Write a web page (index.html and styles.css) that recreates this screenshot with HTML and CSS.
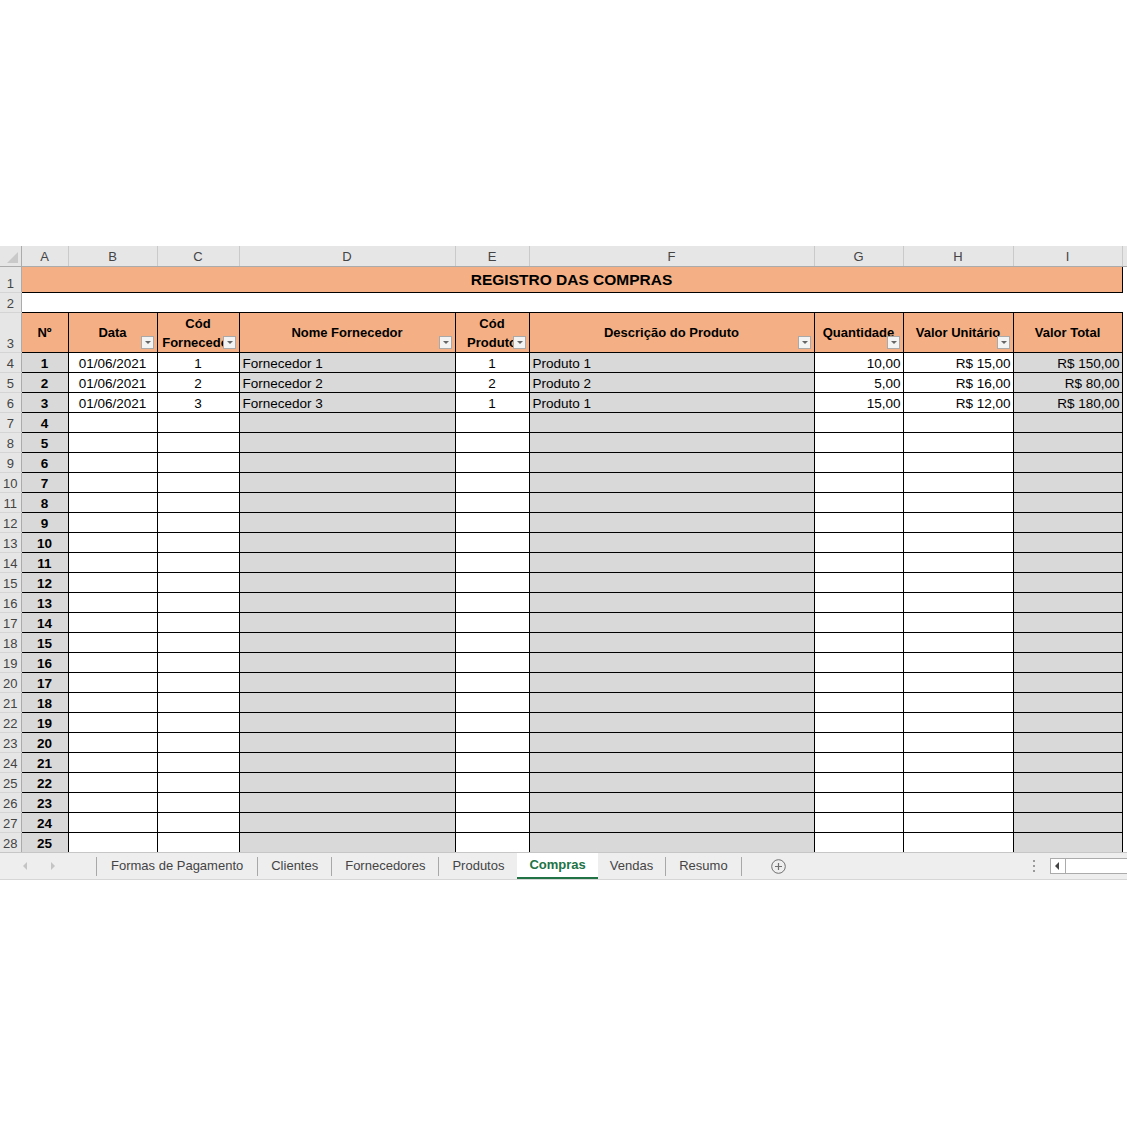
FILE: index.html
```html
<!DOCTYPE html>
<html lang="pt-BR">
<head>
    <meta charset="UTF-8">
    <title>Registro das Compras</title>
    <link rel="stylesheet" href="styles.css">
</head>
<body>

<div id="book">
    <div id="grid">
        <table class="sheet">
            <colgroup>
                <col class="w-rh">
                <col class="w-a">
                <col class="w-b">
                <col class="w-c">
                <col class="w-d">
                <col class="w-e">
                <col class="w-f">
                <col class="w-g">
                <col class="w-h">
                <col class="w-i">
                <col class="w-j">
            </colgroup>
            <tr class="heads">
                <th class="corner"></th>
                <th>A</th><th>B</th><th>C</th><th>D</th><th>E</th><th>F</th><th>G</th><th>H</th><th>I</th><th></th>
            </tr>
            <tr class="row-title">
                <th class="rh">1</th>
                <td class="title" colspan="9">REGISTRO DAS COMPRAS</td>
                <td class="edge"></td>
            </tr>
            <tr class="row">
                <th class="rh">2</th>
                <td class="gap" colspan="9"></td>
                <td class="edge"></td>
            </tr>
            <tr class="row-head">
                <th class="rh">3</th>
                <td class="hd">Nº</td>
                <td class="hd">Data<span class="flt"></span></td>
                <td class="hd">Cód<br>Fornecedor<span class="flt"></span></td>
                <td class="hd">Nome Fornecedor<span class="flt"></span></td>
                <td class="hd">Cód<br>Produto<span class="flt"></span></td>
                <td class="hd">Descrição do Produto<span class="flt"></span></td>
                <td class="hd">Quantidade<span class="flt"></span></td>
                <td class="hd">Valor Unitário<span class="flt"></span></td>
                <td class="hd">Valor Total</td>
                <td class="edge"></td>
            </tr>
            <tr class="row"><th class="rh">4</th><td class="n">1</td><td class="c">01/06/2021</td><td class="c">1</td><td class="g l">Fornecedor 1</td><td class="c">1</td><td class="g l">Produto 1</td><td class="r">10,00</td><td class="r">R$ 15,00</td><td class="g r">R$ 150,00</td><td class="edge"></td></tr>
            <tr class="row"><th class="rh">5</th><td class="n">2</td><td class="c">01/06/2021</td><td class="c">2</td><td class="g l">Fornecedor 2</td><td class="c">2</td><td class="g l">Produto 2</td><td class="r">5,00</td><td class="r">R$ 16,00</td><td class="g r">R$ 80,00</td><td class="edge"></td></tr>
            <tr class="row"><th class="rh">6</th><td class="n">3</td><td class="c">01/06/2021</td><td class="c">3</td><td class="g l">Fornecedor 3</td><td class="c">1</td><td class="g l">Produto 1</td><td class="r">15,00</td><td class="r">R$ 12,00</td><td class="g r">R$ 180,00</td><td class="edge"></td></tr>
            <tr class="row"><th class="rh">7</th><td class="n">4</td><td></td><td></td><td class="g"></td><td></td><td class="g"></td><td></td><td></td><td class="g"></td><td class="edge"></td></tr>
            <tr class="row"><th class="rh">8</th><td class="n">5</td><td></td><td></td><td class="g"></td><td></td><td class="g"></td><td></td><td></td><td class="g"></td><td class="edge"></td></tr>
            <tr class="row"><th class="rh">9</th><td class="n">6</td><td></td><td></td><td class="g"></td><td></td><td class="g"></td><td></td><td></td><td class="g"></td><td class="edge"></td></tr>
            <tr class="row"><th class="rh">10</th><td class="n">7</td><td></td><td></td><td class="g"></td><td></td><td class="g"></td><td></td><td></td><td class="g"></td><td class="edge"></td></tr>
            <tr class="row"><th class="rh">11</th><td class="n">8</td><td></td><td></td><td class="g"></td><td></td><td class="g"></td><td></td><td></td><td class="g"></td><td class="edge"></td></tr>
            <tr class="row"><th class="rh">12</th><td class="n">9</td><td></td><td></td><td class="g"></td><td></td><td class="g"></td><td></td><td></td><td class="g"></td><td class="edge"></td></tr>
            <tr class="row"><th class="rh">13</th><td class="n">10</td><td></td><td></td><td class="g"></td><td></td><td class="g"></td><td></td><td></td><td class="g"></td><td class="edge"></td></tr>
            <tr class="row"><th class="rh">14</th><td class="n">11</td><td></td><td></td><td class="g"></td><td></td><td class="g"></td><td></td><td></td><td class="g"></td><td class="edge"></td></tr>
            <tr class="row"><th class="rh">15</th><td class="n">12</td><td></td><td></td><td class="g"></td><td></td><td class="g"></td><td></td><td></td><td class="g"></td><td class="edge"></td></tr>
            <tr class="row"><th class="rh">16</th><td class="n">13</td><td></td><td></td><td class="g"></td><td></td><td class="g"></td><td></td><td></td><td class="g"></td><td class="edge"></td></tr>
            <tr class="row"><th class="rh">17</th><td class="n">14</td><td></td><td></td><td class="g"></td><td></td><td class="g"></td><td></td><td></td><td class="g"></td><td class="edge"></td></tr>
            <tr class="row"><th class="rh">18</th><td class="n">15</td><td></td><td></td><td class="g"></td><td></td><td class="g"></td><td></td><td></td><td class="g"></td><td class="edge"></td></tr>
            <tr class="row"><th class="rh">19</th><td class="n">16</td><td></td><td></td><td class="g"></td><td></td><td class="g"></td><td></td><td></td><td class="g"></td><td class="edge"></td></tr>
            <tr class="row"><th class="rh">20</th><td class="n">17</td><td></td><td></td><td class="g"></td><td></td><td class="g"></td><td></td><td></td><td class="g"></td><td class="edge"></td></tr>
            <tr class="row"><th class="rh">21</th><td class="n">18</td><td></td><td></td><td class="g"></td><td></td><td class="g"></td><td></td><td></td><td class="g"></td><td class="edge"></td></tr>
            <tr class="row"><th class="rh">22</th><td class="n">19</td><td></td><td></td><td class="g"></td><td></td><td class="g"></td><td></td><td></td><td class="g"></td><td class="edge"></td></tr>
            <tr class="row"><th class="rh">23</th><td class="n">20</td><td></td><td></td><td class="g"></td><td></td><td class="g"></td><td></td><td></td><td class="g"></td><td class="edge"></td></tr>
            <tr class="row"><th class="rh">24</th><td class="n">21</td><td></td><td></td><td class="g"></td><td></td><td class="g"></td><td></td><td></td><td class="g"></td><td class="edge"></td></tr>
            <tr class="row"><th class="rh">25</th><td class="n">22</td><td></td><td></td><td class="g"></td><td></td><td class="g"></td><td></td><td></td><td class="g"></td><td class="edge"></td></tr>
            <tr class="row"><th class="rh">26</th><td class="n">23</td><td></td><td></td><td class="g"></td><td></td><td class="g"></td><td></td><td></td><td class="g"></td><td class="edge"></td></tr>
            <tr class="row"><th class="rh">27</th><td class="n">24</td><td></td><td></td><td class="g"></td><td></td><td class="g"></td><td></td><td></td><td class="g"></td><td class="edge"></td></tr>
            <tr class="row"><th class="rh">28</th><td class="n">25</td><td></td><td></td><td class="g"></td><td></td><td class="g"></td><td></td><td></td><td class="g"></td><td class="edge"></td></tr>
        </table>
    </div>

    <div id="tabbar">
        <div class="nav">
            <span class="arr arr-l"></span>
            <span class="arr arr-r"></span>
        </div>
        <span class="sep"></span>
        <span class="tab first">Formas de Pagamento</span>
        <span class="sep"></span>
        <span class="tab">Clientes</span>
        <span class="sep"></span>
        <span class="tab">Fornecedores</span>
        <span class="sep"></span>
        <span class="tab">Produtos</span>
        <span class="tab active">Compras</span>
        <span class="tab next">Vendas</span>
        <span class="sep"></span>
        <span class="tab">Resumo</span>
        <span class="sep"></span>
        <span class="add">
            <svg width="15" height="15" viewBox="0 0 15 15">
                <circle cx="7.5" cy="7.5" r="6.8" fill="none" stroke="#6f6f6f" stroke-width="1"/>
                <path d="M7.5 4v7M4 7.5h7" stroke="#6f6f6f" stroke-width="1.2"/>
            </svg>
        </span>
        <span class="fill"></span>
        <span class="dots"><i></i><i></i><i></i></span>
        <div class="hscroll"><span class="hs-btn"></span></div>
    </div>
</div>

</body>
</html>
```

FILE: styles.css
```css
*{
    margin: 0;
    padding: 0;
}
body{
    background: #fff;
    font-family: "Liberation Sans", Arial, sans-serif;
    color: #000;
}

#book{
    width: 1127px;
    margin-top: 246px;
    overflow: hidden;
}

/* planilha */
#grid{
    height: 606px;
    overflow: hidden;
}
.sheet{
    width: 1127px;
    border-collapse: collapse;
    table-layout: fixed;
}
.sheet th,
.sheet td{
    padding: 0;
    overflow: hidden;
    white-space: nowrap;
}
.w-rh{ width: 21px; }
.w-a{ width: 47px; }
.w-b{ width: 89px; }
.w-c{ width: 82px; }
.w-d{ width: 216px; }
.w-e{ width: 74px; }
.w-f{ width: 285px; }
.w-g{ width: 89px; }
.w-h{ width: 110px; }
.w-i{ width: 109px; }
.w-j{ width: 5px; }

/* cabeçalho das colunas */
.heads th{
    height: 19px;
    background: #e6e6e6;
    border-right: 1px solid #cacaca;
    border-bottom: 1px solid #ababab;
    font-size: 13px;
    font-weight: normal;
    color: #444;
    text-align: center;
    vertical-align: bottom;
    line-height: 16px;
    padding-bottom: 1px;
}
.heads .corner{
    position: relative;
    border-right-color: #ababab;
}
.corner:after{
    content: '';
    position: absolute;
    right: 3px;
    bottom: 3px;
    width: 0;
    height: 0;
    border-left: 11px solid transparent;
    border-bottom: 11px solid #c9c9c9;
}

/* números das linhas */
.rh{
    background: #e6e6e6;
    border-right: 1px solid #ababab;
    border-bottom: 1px solid #d4d4d4;
    font-size: 13px;
    font-weight: normal;
    color: #444;
    text-align: center;
    vertical-align: bottom;
    line-height: 16px;
    padding-bottom: 1px;
}

.row-title td{ height: 25px; }
.row td{ height: 19px; }
.row-head td{ height: 39px; }

.title{
    background: #f4b084;
    border: 1px solid #000;
    text-align: center;
    vertical-align: middle;
    font-size: 15.5px;
    font-weight: bold;
}
.gap{
    background: #fff;
}
.edge{
    background: #fff;
    border: none;
}

/* linha de títulos com filtros */
.hd{
    position: relative;
    background: #f4b084;
    border: 1px solid #000;
    text-align: center;
    vertical-align: middle;
    font-size: 13px;
    font-weight: bold;
    line-height: 19px;
}
.flt{
    position: absolute;
    right: 3px;
    bottom: 3px;
    width: 13px;
    height: 13px;
    box-sizing: border-box;
    border: 1px solid #a9a9a9;
    background: #f3f3f3;
}
.flt:after{
    content: '';
    position: absolute;
    left: 3px;
    top: 4px;
    border-left: 3px solid transparent;
    border-right: 3px solid transparent;
    border-top: 3px solid #666;
}

/* células de dados */
.row td{
    border: 1px solid #000;
    background: #fff;
    font-size: 13.5px;
    line-height: 16px;
    vertical-align: bottom;
}
.row td.gap{
    border-left: none;
    border-right: none;
}
.row td.edge{
    border: none;
}
.row td.g{
    background: #d9d9d9;
}
.row td.n{
    background: #d9d9d9;
    font-weight: bold;
    text-align: center;
}
.c{ text-align: center; }
.row td.l{ padding-left: 3px; }
.row td.r{ text-align: right; padding-right: 2px; }

/* abas das planilhas */
#tabbar{
    display: flex;
    align-items: center;
    height: 28px;
    box-sizing: border-box;
    background: #eeeeee;
    border-top: 1px solid #c6c6c6;
    border-bottom: 1px solid #d6d6d6;
    font-size: 13px;
    color: #444;
    overflow: hidden;
}
.nav{
    display: flex;
    align-items: center;
    gap: 24px;
    width: 96px;
    padding-left: 23px;
    box-sizing: border-box;
}
.arr{
    width: 0;
    height: 0;
    border-top: 4px solid transparent;
    border-bottom: 4px solid transparent;
}
.arr-l{
    border-right: 4px solid #c4c4c4;
}
.arr-r{
    border-left: 4px solid #c4c4c4;
}
.sep{
    width: 1px;
    height: 19px;
    background: #a8a8a8;
}
.tab{
    padding: 0 13px;
    line-height: 26px;
    white-space: nowrap;
}
.tab.first{
    padding: 0 14px;
}
.tab.next{
    padding: 0 12px;
}
.tab.active{
    align-self: stretch;
    padding: 0 12px;
    background: #fff;
    color: #217346;
    font-weight: bold;
    line-height: 24px;
    border-bottom: 2px solid #217346;
}
.add{
    display: flex;
    margin-left: 29px;
}
.fill{
    flex: 1;
}
.dots{
    display: flex;
    flex-direction: column;
    gap: 3px;
    margin-right: 15px;
}
.dots i{
    display: block;
    width: 2px;
    height: 2px;
    background: #9a9a9a;
}
.hscroll{
    flex: 0 0 77px;
    height: 16px;
    box-sizing: border-box;
    border: 1px solid #ababab;
    border-right: none;
    background: #fff;
    display: flex;
    align-items: center;
}
.hs-btn{
    width: 14px;
    height: 14px;
    border-right: 1px solid #ababab;
    position: relative;
}
.hs-btn:after{
    content: '';
    position: absolute;
    left: 4px;
    top: 3px;
    border-top: 4px solid transparent;
    border-bottom: 4px solid transparent;
    border-right: 4px solid #444;
}
```
